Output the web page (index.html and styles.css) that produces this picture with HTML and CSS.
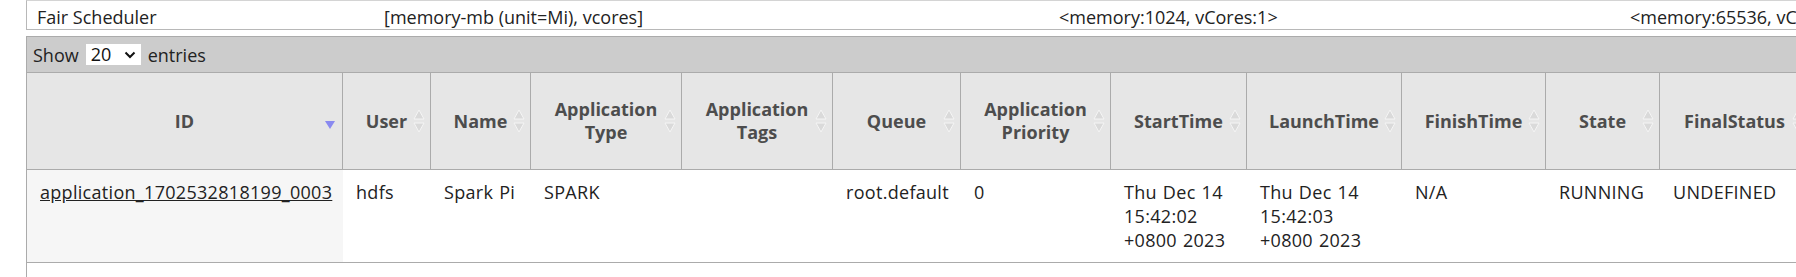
FILE: index.html
```html
<!DOCTYPE html>
<html>
<head>
<meta charset="utf-8">
<link rel="stylesheet" href="styles.css">
</head>
<body>
<div class="page">
  <div class="sched">
    <div class="sched-cell c1">Fair Scheduler</div>
    <div class="sched-cell c2">[memory-mb (unit=Mi), vcores]</div>
    <div class="sched-cell c3">&lt;memory:1024, vCores:1&gt;</div>
    <div class="sched-cell c4">&lt;memory:65536, vC</div>
  </div>
  <div class="apps">
    <div class="toolbar">
      <span>Show</span>
      <span class="select">20
        <svg class="chev" width="12" height="8" viewBox="0 0 12 8"><path d="M1.5 1.5 L6 6 L10.5 1.5" fill="none" stroke="#111" stroke-width="2"/></svg>
      </span>
      <span>entries</span>
    </div>
    <table class="grid">
      <thead>
        <tr>
          <th class="w-id">ID<svg class="sort desc" width="10" height="8" viewBox="0 0 10 8"><path d="M0 0 H10 L5 8 Z" fill="#8a8af0"/></svg></th>
          <th class="w-user">User<svg class="sort" width="12" height="24" viewBox="0 0 12 24"><path d="M6 1 L11 10 H1 Z M1 14 H11 L6 23 Z" fill="#dadada" stroke="#f5f5f5" stroke-width="1"/></svg></th>
          <th class="w-name">Name<svg class="sort" width="12" height="24" viewBox="0 0 12 24"><path d="M6 1 L11 10 H1 Z M1 14 H11 L6 23 Z" fill="#dadada" stroke="#f5f5f5" stroke-width="1"/></svg></th>
          <th class="w-type">Application<br>Type<svg class="sort" width="12" height="24" viewBox="0 0 12 24"><path d="M6 1 L11 10 H1 Z M1 14 H11 L6 23 Z" fill="#dadada" stroke="#f5f5f5" stroke-width="1"/></svg></th>
          <th class="w-tags">Application<br>Tags<svg class="sort" width="12" height="24" viewBox="0 0 12 24"><path d="M6 1 L11 10 H1 Z M1 14 H11 L6 23 Z" fill="#dadada" stroke="#f5f5f5" stroke-width="1"/></svg></th>
          <th class="w-queue">Queue<svg class="sort" width="12" height="24" viewBox="0 0 12 24"><path d="M6 1 L11 10 H1 Z M1 14 H11 L6 23 Z" fill="#dadada" stroke="#f5f5f5" stroke-width="1"/></svg></th>
          <th class="w-prio">Application<br>Priority<svg class="sort" width="12" height="24" viewBox="0 0 12 24"><path d="M6 1 L11 10 H1 Z M1 14 H11 L6 23 Z" fill="#dadada" stroke="#f5f5f5" stroke-width="1"/></svg></th>
          <th class="w-start">StartTime<svg class="sort" width="12" height="24" viewBox="0 0 12 24"><path d="M6 1 L11 10 H1 Z M1 14 H11 L6 23 Z" fill="#dadada" stroke="#f5f5f5" stroke-width="1"/></svg></th>
          <th class="w-launch">LaunchTime<svg class="sort" width="12" height="24" viewBox="0 0 12 24"><path d="M6 1 L11 10 H1 Z M1 14 H11 L6 23 Z" fill="#dadada" stroke="#f5f5f5" stroke-width="1"/></svg></th>
          <th class="w-finish">FinishTime<svg class="sort" width="12" height="24" viewBox="0 0 12 24"><path d="M6 1 L11 10 H1 Z M1 14 H11 L6 23 Z" fill="#dadada" stroke="#f5f5f5" stroke-width="1"/></svg></th>
          <th class="w-state">State<svg class="sort" width="12" height="24" viewBox="0 0 12 24"><path d="M6 1 L11 10 H1 Z M1 14 H11 L6 23 Z" fill="#dadada" stroke="#f5f5f5" stroke-width="1"/></svg></th>
          <th class="w-final">FinalStatus<svg class="sort" width="12" height="24" viewBox="0 0 12 24"><path d="M6 1 L11 10 H1 Z M1 14 H11 L6 23 Z" fill="#dadada" stroke="#f5f5f5" stroke-width="1"/></svg></th>
        </tr>
      </thead>
      <tbody>
        <tr>
          <td class="sorted"><a href="#">application_1702532818199_0003</a></td>
          <td>hdfs</td>
          <td>Spark Pi</td>
          <td>SPARK</td>
          <td></td>
          <td>root.default</td>
          <td>0</td>
          <td>Thu Dec 14 15:42:02 +0800 2023</td>
          <td>Thu Dec 14 15:42:03 +0800 2023</td>
          <td>N/A</td>
          <td>RUNNING</td>
          <td>UNDEFINED</td>
        </tr>
      </tbody>
    </table>
  </div>
</div>
</body>
</html>
```

FILE: styles.css
```css
html, body {
  margin: 0;
  padding: 0;
  background: #ffffff;
  overflow: hidden;
}

body {
  width: 1796px;
  height: 277px;
  font-family: "Open Sans", "Noto Sans", sans-serif;
  font-size: 18px;
  color: #222222;
}

.page {
  margin-left: 26px;
  width: 1770px;
  overflow: hidden;
}

.sched {
  display: flex;
  border-top: 1px solid #d4d4d4;
  border-left: 1px solid #b8b8b8;
  border-bottom: 1px solid #b8b8b8;
  height: 28px;
  white-space: nowrap;
  overflow: hidden;
}

.sched-cell {
  flex: 0 0 auto;
  padding: 4px 0 0 10px;
  line-height: 24px;
  box-sizing: border-box;
}

.c1 { width: 347px; }
.c2 { width: 675px; }
.c3 { width: 571px; }
.c4 { width: 190px; }

.apps {
  margin-top: 6px;
  border-left: 1px solid #ababab;
  height: 241px;
}

.toolbar {
  display: flex;
  align-items: center;
  gap: 7px;
  height: 35px;
  padding-left: 6px;
  background: #cccccc;
  border-top: 1px solid #ababab;
  border-bottom: 1px solid #ababab;
}

.select {
  display: flex;
  align-items: center;
  justify-content: space-between;
  width: 55px;
  height: 21px;
  box-sizing: border-box;
  padding: 0 5px 0 5px;
  background: #ffffff;
  color: #111111;
  line-height: 21px;
}

.chev {
  display: block;
}

.grid {
  border-collapse: separate;
  border-spacing: 0;
  table-layout: fixed;
  width: 1783px;
}

.grid th {
  position: relative;
  box-sizing: border-box;
  height: 97px;
  padding: 0 10px;
  background: #e6e6e6;
  color: #4d4d4d;
  font-weight: 700;
  line-height: 23px;
  text-align: center;
  vertical-align: middle;
  border-right: 1px solid #ababab;
  border-bottom: 1px solid #ababab;
}

.sort {
  position: absolute;
  right: 5px;
  top: 36px;
}

.sort.desc {
  right: 7px;
  top: 48px;
}

.w-id { width: 316px; }
.w-user { width: 88px; }
.w-name { width: 100px; }
.w-type { width: 151px; }
.w-tags { width: 151px; }
.w-queue { width: 128px; }
.w-prio { width: 150px; }
.w-start { width: 136px; }
.w-launch { width: 155px; }
.w-finish { width: 144px; }
.w-state { width: 114px; }
.w-final { width: 150px; }

.grid td {
  box-sizing: border-box;
  height: 93px;
  padding: 10px 13px 10px 13px;
  line-height: 24px;
  letter-spacing: 0.3px;
  word-spacing: 1px;
  vertical-align: top;
  text-align: left;
  border-bottom: 1px solid #ababab;
  background: #ffffff;
}

.grid td.sorted {
  background: #f6f6f6;
}

.grid a {
  color: #222222;
  text-decoration: underline;
}
```
